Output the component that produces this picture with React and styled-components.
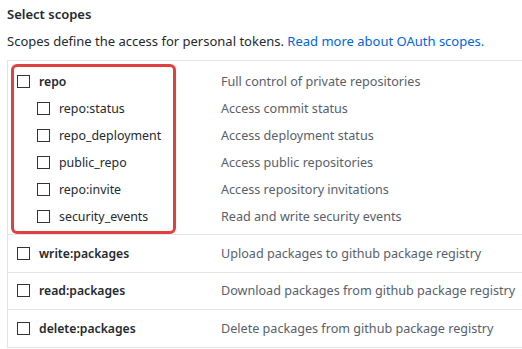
import React from 'react'
import styled, { createGlobalStyle } from 'styled-components'

const GlobalStyle = createGlobalStyle`
  html, body {
    margin: 0;
    padding: 0;
    background: #fff;
    overflow: hidden;
  }
  body {
    font-family: "Noto Sans", "Open Sans", sans-serif;
    color: #24292e;
  }
`

const repoScopes = [
  { name: 'repo:status', desc: 'Access commit status' },
  { name: 'repo_deployment', desc: 'Access deployment status' },
  { name: 'public_repo', desc: 'Access public repositories' },
  { name: 'repo:invite', desc: 'Access repository invitations' },
  { name: 'security_events', desc: 'Read and write security events' },
]

const otherScopes = [
  { name: 'write:packages', desc: 'Upload packages to github package registry' },
  { name: 'read:packages', desc: 'Download packages from github package registry' },
  { name: 'delete:packages', desc: 'Delete packages from github package registry' },
]

const Page = styled.div`
  padding: 4px 0 0 7px;
  width: 540px;
`

const Title = styled.h3`
  margin: 0;
  font-size: 13px;
  font-weight: 600;
  line-height: 20px;
`

const Note = styled.p`
  margin: 7px 0 0;
  font-size: 13px;
  line-height: 20px;
  color: #24292e;
  a {
    color: #0366d6;
    text-decoration: none;
  }
`

const ScopeTable = styled.div`
  margin-top: 9px;
  border-top: 1px solid #e1e4e8;
  border-left: 1px solid #e1e4e8;
`

const Group = styled.div`
  position: relative;
  padding: 7px 0 4px;
  border-bottom: 1px solid #e1e4e8;
`

const Highlight = styled.div`
  position: absolute;
  left: 3px;
  top: 3px;
  width: 165px;
  height: 170px;
  border: 3px solid #e0403f;
  border-radius: 6px;
  box-sizing: border-box;
  pointer-events: none;
`

const Row = styled.div`
  display: grid;
  grid-template-columns: 213px 1fr;
  align-items: center;
  height: ${p => (p.$tall ? '37.5px' : '27px')};
  border-bottom: ${p => (p.$tall ? '1px solid #e1e4e8' : 'none')};
  box-sizing: border-box;
`

const Label = styled.label`
  display: flex;
  align-items: center;
  gap: 9px;
  padding-left: ${p => (p.$sub ? '29px' : '9px')};
  font-size: ${p => (p.$sub ? '12.4px' : '12.2px')};
  font-weight: ${p => (p.$sub ? 400 : 600)};
  color: #24292e;
  white-space: nowrap;
`

const Box = styled.span`
  width: 13px;
  height: 13px;
  box-sizing: border-box;
  border: 1px solid #333;
  background: #fff;
  flex: none;
`

const Desc = styled.span`
  font-size: 12.6px;
  color: #586069;
  white-space: nowrap;
`

const ScopeRow = ({ name, desc, sub, tall }) => (
  <Row $tall={tall}>
    <Label $sub={sub}>
      <Box />
      {name}
    </Label>
    <Desc>{desc}</Desc>
  </Row>
)

export default function App() {
  return (
    <Page>
      <GlobalStyle />
      <Title>Select scopes</Title>
      <Note>
        Scopes define the access for personal tokens. <a href="#">Read more about OAuth scopes.</a>
      </Note>
      <ScopeTable>
        <Group>
          <Highlight />
          <ScopeRow name="repo" desc="Full control of private repositories" />
          {repoScopes.map(s => (
            <ScopeRow key={s.name} name={s.name} desc={s.desc} sub />
          ))}
        </Group>
        {otherScopes.map(s => (
          <ScopeRow key={s.name} name={s.name} desc={s.desc} tall />
        ))}
      </ScopeTable>
    </Page>
  )
}
